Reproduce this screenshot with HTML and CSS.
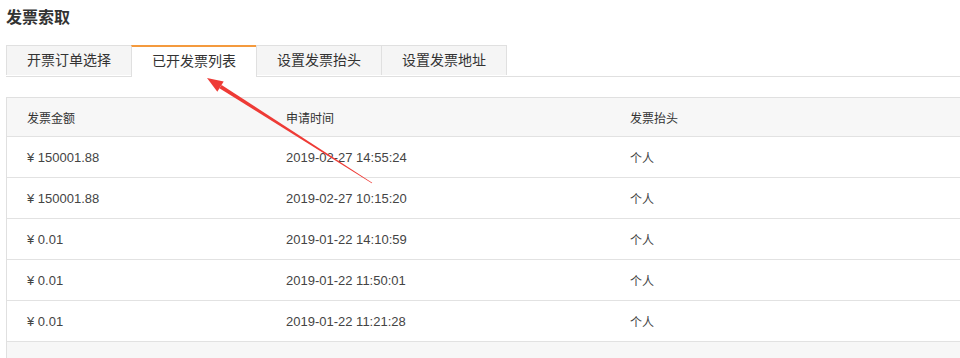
FILE: index.html
```html
<!DOCTYPE html>
<html lang="zh-CN">
<head>
    <meta charset="UTF-8">
    <title>发票索取</title>
    <link rel="stylesheet" href="styles.css">
</head>
<body>
    <div class="page">
        <h1 class="title">发票索取</h1>

        <!-- 选项卡 -->
        <ul class="tabs">
            <li class="tab">开票订单选择</li>
            <li class="tab active">已开发票列表</li>
            <li class="tab">设置发票抬头</li>
            <li class="tab">设置发票地址</li>
        </ul>

        <!-- 发票列表 -->
        <div class="list">
            <table class="invoice-table">
                <colgroup>
                    <col class="col-amount">
                    <col class="col-time">
                    <col>
                </colgroup>
                <thead>
                    <tr>
                        <th>发票金额</th>
                        <th>申请时间</th>
                        <th>发票抬头</th>
                    </tr>
                </thead>
                <tbody>
                    <tr>
                        <td class="num">¥ 150001.88</td>
                        <td class="num">2019-02-27 14:55:24</td>
                        <td>个人</td>
                    </tr>
                    <tr>
                        <td class="num">¥ 150001.88</td>
                        <td class="num">2019-02-27 10:15:20</td>
                        <td>个人</td>
                    </tr>
                    <tr>
                        <td class="num">¥ 0.01</td>
                        <td class="num">2019-01-22 14:10:59</td>
                        <td>个人</td>
                    </tr>
                    <tr>
                        <td class="num">¥ 0.01</td>
                        <td class="num">2019-01-22 11:50:01</td>
                        <td>个人</td>
                    </tr>
                    <tr>
                        <td class="num">¥ 0.01</td>
                        <td class="num">2019-01-22 11:21:28</td>
                        <td>个人</td>
                    </tr>
                </tbody>
            </table>
            <div class="list-footer"></div>
        </div>
    </div>

    <!-- 标注箭头 -->
    <svg class="mark" width="960" height="358" viewBox="0 0 960 358">
        <polygon points="207,78 223.7,81.5 217.3,91.7" fill="#ee3b36"/>
        <polygon points="221.6,85 219.4,88.2 371.8,183.3 372.2,182.7" fill="#ee3b36"/>
    </svg>
</body>
</html>
```

FILE: styles.css
```css
/* 发票索取 */
body {
    margin: 0;
    padding: 0;
    background: #fff;
    color: #333;
    font-family: "Liberation Sans", "Noto Sans CJK SC", sans-serif;
    overflow: hidden;
}

.page {
    padding: 8px 0 0 6px;
}

.title {
    margin: 0;
    font-size: 16px;
    line-height: 20px;
    font-weight: bold;
    color: #333;
}

.tabs {
    display: flex;
    list-style: none;
    margin: 17px 0 0 0;
    padding: 0;
    border-bottom: 1px solid #e0e0e0;
}

.tab {
    height: 29px;
    line-height: 29px;
    padding: 0 20px;
    margin-left: -1px;
    font-size: 14px;
    color: #333;
    background: #f5f5f5;
    border: 1px solid #e0e0e0;
    border-bottom: none;
}

.tab:first-child {
    margin-left: 0;
}

.tab.active {
    background: #fff;
    border-top: 2px solid #f49a3d;
    height: 29px;
    line-height: 28px;
    margin-bottom: -1px;
    padding-bottom: 1px;
}

.list {
    margin-top: 20px;
    width: 1000px;
    border-left: 1px solid #e0e0e0;
    border-top: 1px solid #e0e0e0;
}

.invoice-table {
    width: 100%;
    border-collapse: collapse;
    table-layout: fixed;
    font-size: 12px;
}

.col-amount {
    width: 259px;
}

.col-time {
    width: 344px;
}

.invoice-table th {
    height: 38px;
    padding: 0 0 0 20px;
    text-align: left;
    font-weight: normal;
    color: #333;
    background: #f7f7f7;
    border-bottom: 1px solid #e2e2e2;
}

.invoice-table td {
    height: 40px;
    padding: 0 0 0 20px;
    color: #444;
    border-bottom: 1px solid #e2e2e2;
}

.invoice-table td.num {
    font-size: 13px;
}

.list-footer {
    height: 16px;
    background: #f7f7f7;
}

.mark {
    position: absolute;
    left: 0;
    top: 0;
    pointer-events: none;
}
```
